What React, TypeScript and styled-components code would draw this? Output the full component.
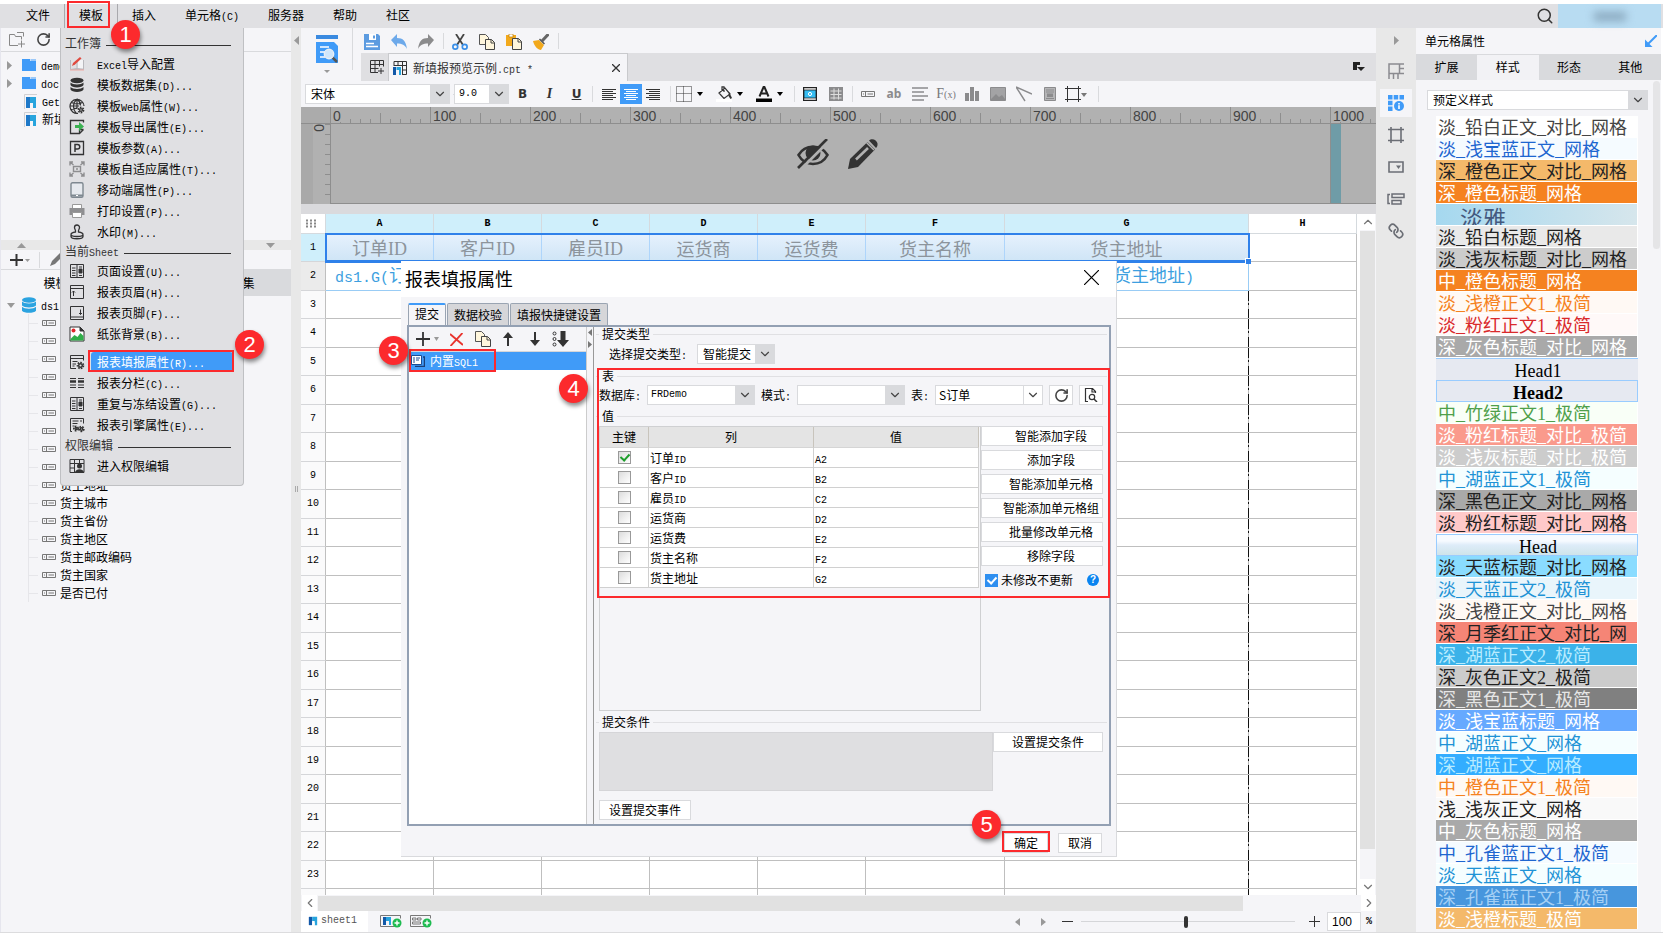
import React from "react";
import styled, { createGlobalStyle, css } from "styled-components";
import { ChevronDown, ChevronLeft, ChevronRight, ChevronUp, Link, RotateCw, Search } from "lucide-react";

const CJK = `"Noto Sans CJK SC", "Liberation Sans", sans-serif`;
const MONO = `"Liberation Mono", "Noto Sans CJK SC", monospace`;
const SERIF = `"Liberation Serif", "Noto Sans CJK SC", serif`;
const BLUE = "#409bf8";
const RED = "#fc2a2d";

const Global = createGlobalStyle`
  * { box-sizing: border-box; }
  body { margin: 0; overflow: hidden; background: #fff; }
  body, button, input, select, textarea { font-family: ${CJK}; font-size: 12px; line-height: 16px; color: #000; }
  button { padding: 0; border: 0; background: none; }
  ul { list-style: none; margin: 0; padding: 0; }
  svg { display: block; flex: none; }
`;

/* ---------- mixed CJK / half-width text ---------- */
const Latin = styled.span<{ $px: number }>`
  font-family: ${(p) => (p.$px === 18 ? SERIF : MONO)};
  font-size: ${(p) => p.$px}px;
  line-height: 1;
  white-space: pre;
`;
const Txt = ({ s, px = 10 }: { s: string; px?: number }) => (
  <span>
    {s.split(/([\x20-\x7e]+)/).map((part, i) =>
      i % 2 ? <Latin key={i} $px={px}>{part}</Latin> : part
    )}
  </span>
);

/* ---------- shared parts ---------- */
const Badge = styled.span<{ $x: number; $y: number }>`
  position: absolute;
  left: ${(p) => p.$x}px;
  top: ${(p) => p.$y}px;
  width: 29px;
  height: 29px;
  border-radius: 50%;
  background: ${RED};
  box-shadow: 1px 3px 4px rgba(0, 0, 0, 0.45);
  color: #fff;
  font: 22px/29px "Liberation Sans", sans-serif;
  text-align: center;
  z-index: 5;
`;
const RedBox = styled.span<{ $x: number; $y: number; $w: number; $h: number }>`
  position: absolute;
  left: ${(p) => p.$x}px;
  top: ${(p) => p.$y}px;
  width: ${(p) => p.$w}px;
  height: ${(p) => p.$h}px;
  border: 2px solid ${RED};
  pointer-events: none;
  z-index: 4;
`;
const Sep = styled.i<{ $l?: number; $r?: number; $h?: number }>`
  flex: none;
  width: 1px;
  height: ${(p) => p.$h ?? 16}px;
  margin: 0 ${(p) => p.$r ?? 0}px 0 ${(p) => p.$l ?? 0}px;
  background: #d9dadd;
`;
const Push = styled.span`
  flex: 1;
`;
const Icon = ({ w = 16, h = 16, vb, children }: { w?: number; h?: number; vb?: string; children: React.ReactNode }) => (
  <svg width={w} height={h} viewBox={vb ?? `0 0 ${w} ${h}`} fill="none" stroke="#333334" strokeWidth="1">
    {children}
  </svg>
);
const Tri = ({ dir, color = "#999", w = 8, h = 5 }: { dir: "u" | "d" | "l" | "r"; color?: string; w?: number; h?: number }) => {
  const pts = {
    d: `0,0 ${w},0 ${w / 2},${h}`,
    u: `0,${h} ${w},${h} ${w / 2},0`,
    l: `${w},0 ${w},${h} 0,${h / 2}`,
    r: `0,0 0,${h} ${w},${h / 2}`,
  }[dir];
  return (
    <svg width={w} height={h}>
      <polygon points={pts} fill={color} />
    </svg>
  );
};

const SelectWrap = styled.span<{ $w?: number }>`
  position: relative;
  display: flex;
  flex: none;
  width: ${(p) => (p.$w ? p.$w + "px" : "auto")};
  height: 20px;
`;
const NativeSelect = styled.select<{ $mono?: boolean; $px?: number; $pad?: number }>`
  appearance: none;
  width: 100%;
  height: 20px;
  margin: 0;
  padding: 0 20px 0 ${(p) => p.$pad ?? 5}px;
  border: 1px solid #d9dadd;
  border-radius: 0;
  background: #fff;
  font-family: ${(p) => (p.$mono ? MONO : CJK)};
  font-size: ${(p) => p.$px ?? 12}px;
  line-height: 18px;
`;
const Arrow = styled.span<{ $plain?: boolean }>`
  position: absolute;
  right: 0;
  top: 0;
  width: 20px;
  height: 20px;
  display: flex;
  align-items: center;
  justify-content: center;
  background: ${(p) => (p.$plain ? "#fff" : "#d9dadd")};
  border: 1px solid #d9dadd;
  color: #444;
  pointer-events: none;
`;
const Combo = ({ label, value, w, mono, px, pad, plain, id }: { label: string; value: string; w?: number; mono?: boolean; px?: number; pad?: number; plain?: boolean; id?: string }) => (
  <SelectWrap $w={w}>
    <NativeSelect id={id} aria-label={label} $mono={mono} $px={px} $pad={pad}>
      <option>{value}</option>
    </NativeSelect>
    <Arrow $plain={plain}>
      <ChevronDown size={14} strokeWidth={2} />
    </Arrow>
  </SelectWrap>
);

/* ---------- icons ---------- */
const Logo = ({ s = 12 }: { s?: number }) => (
  <svg width={s} height={s} viewBox="0 0 12 12">
    <path d="M1 1h4v10H1z" fill="#1258a8" />
    <path d="M5 1h6v10H8V6H5z" fill="#27a4dd" />
    <path d="M5 6l3 2v3H5z" fill="#fff" />
  </svg>
);
const Gear = ({ x, y, r = 2.4 }: { x: number; y: number; r?: number }) => (
  <g>
    <circle cx={x} cy={y} r={r + 0.6} stroke="#333" strokeWidth="1.6" strokeDasharray="1.6 1.1" />
    <circle cx={x} cy={y} r={r - 0.6} stroke="#333" strokeWidth="1.4" fill="#e0e0e3" />
  </g>
);
const PageCols = () => (
  <Icon>
    <path d="M1.5 1.500h13v13h-13zM8 1.500v13M3 5h3.500M3 7.500h3.500M3 10h3.500M3 12.500h3.500M10 4h3M10 12.500h3" />
    <path d="M10 6h3v4h-3z" fill="#333" />
  </Icon>
);
const menuIcons: Record<string, React.ReactNode> = {
  excel: (
    <Icon>
      <path d="M1.500 4v9.500h13V4M1.500 13.500l6.500-1 6.500 1M8 5v7" stroke="#b9b9bd" />
      <path d="M9 4h5v8H9z" fill="#f4f4f6" stroke="none" />
      <path d="M1 14h14" stroke="#f0a9a4" />
      <path d="M3 10l1-3 7-6 1.500 1.500-6.500 6z" fill="#e04a3f" stroke="none" />
    </Icon>
  ),
  db: (
    <Icon>
      <g fill="#333" stroke="none">
        <ellipse cx="8" cy="3.500" rx="6.500" ry="2.700" />
        <path d="M1.500 5.500c2 2.600 11 2.600 13 0v2.500c-1 3.200-12 3.200-13 0z" />
        <path d="M1.500 10c2 2.600 11 2.600 13 0v2.500c-1 3.200-12 3.200-13 0z" />
      </g>
    </Icon>
  ),
  web: (
    <Icon>
      <path d="M9 15.300A7 7 0 1 1 15 8M1 8h9M8 1v9M2.500 4.500c3 1.500 8 1.500 11 0M2.500 11.500c2-1 4-1.200 6-1M8 1C3.500 5 3.500 11 7 15M8 1c3 2.500 3.500 5 3.500 6.500" strokeWidth="1.200" />
      <Gear x={12} y={12} r={2} />
    </Icon>
  ),
  export: (
    <Icon>
      <path d="M14.500 3.500V1.500h-13v13h9l4-4M10.500 14.500v-4h4" strokeWidth="1.300" />
      <path d="M6 6h4V3l5 4.500-5 4.500V9H6z" fill="#3bb152" stroke="none" />
    </Icon>
  ),
  param: (
    <Icon>
      <path d="M1.500 1.500h13v13h-13z" strokeWidth="1.300" />
      <path d="M6 12V4.500h2.500a2 2 0 0 1 0 4.500H6" strokeWidth="1.500" />
    </Icon>
  ),
  fit: (
    <Icon>
      <g stroke="#8e8e90" strokeWidth="1.400">
        <path d="M4.500 5.500h7v5h-7zM1 1l3.500 3M15 1l-3.500 3M1 15l3.500-3M15 15l-3.500-3M1 4.500V1h3M12 1h3v3.500M1 11.500V15h3M12 15h3v-3.500M7 8h2" />
      </g>
    </Icon>
  ),
  mobile: (
    <Icon>
      <rect x="2" y="0.700" width="12" height="14.600" rx="1.500" fill="#e6e9ee" stroke="#7e8890" strokeWidth="1.400" />
      <path d="M2 12.500h12v2H2z" fill="#7e8890" stroke="none" />
      <path d="M7 13.500h2" stroke="#fff" />
    </Icon>
  ),
  print: (
    <Icon>
      <path d="M3.500 1.500h9v4h-9z" fill="#fff" stroke="#999" />
      <path d="M0.500 5h15v7h-15z" fill="#8f8f91" stroke="none" />
      <path d="M3.500 9.500h9v5h-9z" fill="#fff" stroke="#999" />
    </Icon>
  ),
  stamp: (
    <Icon>
      <path d="M6.500 8C7 6 5.500 5.500 5.500 3.500a2.500 2.500 0 0 1 5 0C10.500 5.500 9 6 9.500 8c3 .5 4.500 1.500 4.500 2.500s-2 2-6 2-6-1-6-2S3.500 8.500 6.500 8zM2 11v1.500c0 3 12 3 12 0V11" strokeWidth="1.300" />
    </Icon>
  ),
  page: <PageCols />,
  header: (
    <Icon>
      <path d="M1.500 1.500h13v13h-13zM1.500 4.500h13M4.500 7v5M3 8.500L4.500 7 6 8.500" />
    </Icon>
  ),
  footer: (
    <Icon>
      <path d="M1.500 1.500h13v13h-13zM1.500 12h13M11.500 4.500v5M10 8l1.500 1.500L13 8" />
    </Icon>
  ),
  image: (
    <Icon>
      <path d="M1 1h10l4 4v10H1z" fill="#fff" stroke="#333" />
      <path d="M11 1v4h4z" fill="#333" />
      <circle cx="4.500" cy="4.500" r="2" fill="#e0262a" stroke="none" />
      <path d="M1.500 13l4-4 3 2 3-4 3 3v4.500h-13z" fill="#2fae49" stroke="none" />
    </Icon>
  ),
  fill: (
    <Icon>
      <path d="M7 14.500H1.500v-13h13v5M1.500 4.500h13M3.500 7.500h5M3.500 10h3.500M3.500 12h2" />
      <Gear x={11.500} y={11.500} />
    </Icon>
  ),
  cols: (
    <Icon>
      <path d="M1 3.500h6M9 3.500h6M1 10h6M9 10h6M1 12.500h6M9 12.500h6" />
      <path d="M1 6.500h6M9 6.500h6" strokeWidth="2.500" />
    </Icon>
  ),
  engine: (
    <Icon>
      <path d="M3 14.500H1.500v-13h13v5M3.500 4h6M11 4h2M3.500 6.500h5M3.500 9h2" />
      <Gear x={7} y={11.500} r={1.600} />
      <Gear x={12.500} y={12} r={1.800} />
    </Icon>
  ),
  perm: (
    <Icon>
      <path d="M1 1.500h14v13H1zM1 5.500h14M1 10h4M5.500 1v14M10.500 1v5" />
      <circle cx="10.500" cy="8" r="2.500" fill="#333" stroke="none" />
      <path d="M6 15c0-5 9-5 9 0z" fill="#333" stroke="none" />
    </Icon>
  ),
};

/* ---------- shell ---------- */
const App_ = styled.div`
  display: flex;
  flex-direction: column;
  height: 100vh;
  padding-top: 4px;
  border-bottom: 1px solid #dcdcde;
  background: #fff;
`;
const MenuBar = styled.nav`
  display: flex;
  flex: none;
  height: 24px;
  padding-left: 11px;
  background: #e0e0e3;
  position: relative;
  z-index: 10;
`;
const MenuEntry = styled.div<{ $open?: boolean }>`
  position: relative;
  display: flex;
  ${(p) => p.$open && css`box-shadow: inset 1px 0 #a9a9ad, 1px 0 #a9a9ad;`}
`;
const MenuButton = styled.button`
  padding: 0 14px 2px 15px;
  white-space: nowrap;
`;
const SearchButton = styled.button`
  width: 24px;
  display: grid;
  place-items: center;
`;
const UserArea = styled.div`
  width: 103px;
  margin: 0 2px 0 1px;
  background: #b8dcf2;
  display: grid;
  place-items: center;
`;
const UserBlur = styled.span`
  width: 32px;
  height: 9px;
  background: #8aa9bf;
  filter: blur(4px);
`;
const Popup = styled.div`
  position: absolute;
  left: -4px;
  top: 24px;
  width: 184px;
  padding: 5px 0 9px;
  background: #e0e0e3;
  border: 1px solid #bfc0c3;
  border-top: 0;
  border-radius: 0 0 4px 4px;
`;
const PopupHead = styled.div<{ $h?: number }>`
  display: flex;
  align-items: center;
  gap: 5px;
  height: ${(p) => p.$h ?? 20}px;
  margin: 0 12px 0 4px;
  color: #333;
  &::after {
    content: "";
    flex: 1;
    height: 1px;
    margin-top: 4px;
    background: #333;
  }
`;
const PopupItem = styled.button<{ $active?: boolean }>`
  display: flex;
  align-items: center;
  width: 172px;
  height: 21px;
  padding-left: 8px;
  text-align: left;
  color: ${(p) => (p.$active ? "#fff" : "#000")};
  & > span {
    flex: 1;
    margin-left: 6px;
    padding-left: 6px;
    line-height: 20px;
    border-radius: 3px;
    background: ${(p) => (p.$active ? BLUE : "transparent")};
  }
`;
const PopupRule = styled.div`
  height: 7px;
  margin: 0 14px 0 30px;
  border-bottom: 1px dashed #999;
`;

const Main = styled.div`
  flex: 1;
  min-height: 0;
  display: grid;
  grid-template-columns: 291px 10px minmax(0, 1fr) 40px 245px 2px;
`;

/* ---------- left ---------- */
const Left = styled.aside`
  display: flex;
  flex-direction: column;
  min-height: 0;
  border-left: 1px solid #e6e6ee;
  background: #f5f5f8;
`;
const LeftBar = styled.div<{ $h: number; $gap: number }>`
  display: flex;
  flex: none;
  align-items: center;
  gap: ${(p) => p.$gap}px;
  height: ${(p) => p.$h}px;
  padding-left: 8px;
  border-bottom: 1px solid #d9dadd;
`;
const Tree = styled.ul<{ $h?: number }>`
  flex: none;
  height: ${(p) => (p.$h ? p.$h + "px" : "auto")};
  padding-top: ${(p) => (p.$h ? 4 : 0)}px;
`;
const TreeRow = styled.li`
  display: flex;
  align-items: center;
  height: 18px;
  padding-left: 6px;
  white-space: nowrap;
`;
const Twist = styled.span`
  width: 15px;
`;
const NodeText = styled.span`
  margin-left: 5px;
`;
const Splitter = styled.div`
  display: flex;
  flex: none;
  align-items: center;
  justify-content: space-between;
  height: 10px;
  padding: 0 16px;
  background: #e8e8e8;
`;
const DsTabs = styled.div`
  display: grid;
  grid-template-columns: 1fr 1fr;
  flex: none;
  height: 26px;
`;
const DsTab = styled.button<{ $active?: boolean }>`
  background: ${(p) => (p.$active ? "#f5f5f8" : "#d9dadd")};
`;
const Field = styled.li`
  display: flex;
  align-items: center;
  gap: 4px;
  height: 18px;
  margin-left: 27px;
  border-left: 1px solid #e6e6ea;
  &::before {
    content: "";
    width: 9px;
    height: 1px;
    background: #e6e6ea;
  }
`;
const VSplit = styled.div`
  display: flex;
  flex-direction: column;
  align-items: center;
  justify-content: space-between;
  padding: 8px 0 440px;
  background: #e8e8e8;
`;
const Grip = styled.i`
  width: 3px;
  height: 6px;
  border: solid #aaa;
  border-width: 0 1px;
`;

/* ---------- centre ---------- */
const Center = styled.main`
  position: relative;
  display: flex;
  flex-direction: column;
  min-width: 0;
  min-height: 0;
  background: #f5f5f8;
`;
const TopTools = styled.div`
  display: flex;
  flex: none;
  height: 53px;
`;
const PreviewButton = styled.button`
  display: flex;
  flex-direction: column;
  align-items: center;
  gap: 7px;
  width: 51px;
  padding-top: 7px;
`;
const TopRight = styled.div`
  flex: 1;
  min-width: 0;
  display: flex;
  flex-direction: column;
  padding-left: 8px;
`;
const QuickBar = styled.div`
  display: flex;
  align-items: center;
  height: 25px;
`;
const Quick = styled.button`
  width: 27px;
  height: 24px;
  padding: 2px 0 0 3px;
`;
const FileTabs = styled.div`
  display: flex;
  align-items: center;
  height: 28px;
  padding-right: 11px;
  background: #dfdfe2;
`;
const NewTab = styled.button`
  width: 27px;
  padding-left: 9px;
`;
const FileTab = styled.div`
  display: flex;
  align-items: center;
  gap: 6px;
  width: 240px;
  height: 28px;
  padding: 0 7px 0 4px;
  border: solid #c9cacd;
  border-width: 1px 1px 0;
  background: #f5f5f8;
  color: #333;
`;
const FormatBar = styled.div`
  display: flex;
  flex: none;
  align-items: center;
  height: 26px;
  padding-left: 4px;
`;
const Tool = styled.button<{ $w: number; $active?: boolean; $menu?: boolean }>`
  display: flex;
  flex: none;
  align-items: center;
  justify-content: ${(p) => (p.$menu ? "flex-start" : "center")};
  gap: 5px;
  width: ${(p) => p.$w}px;
  height: 20px;
  padding-left: ${(p) => (p.$menu ? 2 : 0)}px;
  background: ${(p) => (p.$active ? BLUE : "transparent")};
`;
const Glyph = styled.span<{ $kind: "b" | "i" | "u" | "ab" | "fx" }>`
  font: 700 12px/16px "DejaVu Sans", sans-serif;
  color: #333;
  ${(p) => p.$kind === "i" && css`font: italic 700 14px/16px "Liberation Serif", serif;`}
  ${(p) => p.$kind === "u" && css`text-decoration: underline;`}
  ${(p) => p.$kind === "ab" && css`font: 700 12px/16px "Noto Sans", sans-serif; color: #8b8b8d;`}
  ${(p) => p.$kind === "fx" && css`font: 14px/16px "Liberation Serif", serif; color: #77777a;`}
`;
const FxArg = styled.span`
  font-size: 10px;
`;

const Canvas = styled.section`
  display: grid;
  grid-template-columns: 29px minmax(0, 1fr);
  grid-template-rows: 17px 80px;
  flex: none;
  overflow: hidden;
  background: #b1b1b1;
`;
const Corner = styled.div`
  border-bottom: 1px solid #8e8e8e;
  background: #ababab;
`;
const HRuler = styled.div`
  display: flex;
  overflow: hidden;
  border-bottom: 1px solid #8e8e8e;
  background: repeating-linear-gradient(90deg, #8e8e8e 0 1px, transparent 1px 10px) 0 100% / 100% 4px no-repeat,
    linear-gradient(90deg, transparent 50px, #8e8e8e 50px 51px, transparent 51px) 0 100% / 100px 10px repeat-x;
`;
const HMark = styled.span`
  flex: none;
  width: 100px;
  height: 16px;
  border-left: 1px solid #8e8e8e;
  & > span {
    display: inline-block;
    height: 15px;
    padding: 0 2px 0 2px;
    background: #b1b1b1;
    font: 14px/18px "Liberation Sans", sans-serif;
    color: #444;
  }
`;
const VRuler = styled.div`
  padding: 0 8px 0 12px;
  background: repeating-linear-gradient(#8e8e8e 0 1px, transparent 1px 10px) 100% 0 / 5px 100% no-repeat,
    linear-gradient(90deg, #a9a9a9 12px, #b1b1b1 12px);
  & > span {
    display: block;
    width: 12px;
    height: 9px;
    font: 14px/12px "Liberation Sans", sans-serif;
    color: #444;
    writing-mode: vertical-rl;
  }
`;
const CanvasBody = styled.div`
  display: flex;
  overflow: hidden;
  border: solid #8e8e8e;
  border-width: 0 0 1px 1px;
`;
const CanvasPage = styled.div`
  display: flex;
  flex: none;
  justify-content: center;
  gap: 19px;
  width: 1000px;
  padding: 15px 0 0 14px;
  border-right: 1px solid #8e8e8e;
`;
const TealStrip = styled.i`
  width: 10px;
  background: #6f9ca7;
`;
const GrayGap = styled.div`
  flex: none;
  height: 10px;
  background: #dadadd;
`;

const SheetArea = styled.div`
  position: relative;
  flex: 1;
  min-height: 0;
  display: grid;
  grid-template-columns: minmax(0, 1fr) 16px;
  overflow: hidden;
  background: #fff;
`;
const SheetClip = styled.div`
  overflow: hidden;
  min-height: 0;
  position: relative;
`;
const Grid = styled.table`
  table-layout: fixed;
  width: 1056px;
  border-collapse: separate;
  border-spacing: 0;
  background: #fff;
`;
const ColHead = styled.th<{ $on?: boolean }>`
  height: 20px;
  padding: 0;
  border: solid #d5dade;
  border-width: 0 1px 1px 0;
  background: ${(p) => (p.$on ? "#cfeffb" : "#fff")};
  font: 700 10px/18px ${MONO};
`;
const RowHead = styled.th<{ $bg: string }>`
  padding: 0;
  border: solid #bfbfbf;
  border-width: 0 1px 1px 0;
  border-bottom-color: #d5d6d9;
  background: ${(p) => p.$bg};
  font: 400 10px/16px ${MONO};
`;
const Row = styled.tr<{ $h: number }>`
  height: ${(p) => p.$h}px;
`;
const Cell = styled.td<{ $kind?: "title" | "data"; $left?: boolean; $break?: boolean }>`
  padding: 0;
  border: solid #bfbfbf;
  border-width: 0 1px 1px 0;
  text-align: center;
  white-space: nowrap;
  font-size: 18px;
  line-height: 20px;
  ${(p) => p.$kind === "title" && css`color: #8c949c; background: linear-gradient(#e6f1fd, #cfe5f6); border-color: #aed5fb;`}
  ${(p) => p.$kind === "data" && css`color: #3d9fe0; border-color: #99ccf5; padding-bottom: 3px; overflow: hidden;`}
  ${(p) => p.$left && css`text-align: left; padding-left: 9px;`}
  ${(p) =>
    p.$break &&
    css`
      border-right: 0;
      background: repeating-linear-gradient(#111 0 10px, #bbb 10px 12px, #111 12px 14px, #bbb 14px 18px) 100% 0 / 1px 100% no-repeat;
    `}
`;
const Selection = styled.div`
  position: absolute;
  left: 24px;
  top: 19px;
  width: 925px;
  height: 30px;
  border: 2px solid #2f81ea;
  border-bottom-width: 3px;
  &::after {
    content: "";
    position: absolute;
    right: -3px;
    bottom: -4px;
    width: 5px;
    height: 5px;
    background: #2f81ea;
    border: solid #fff;
    border-width: 1px 0 0 1px;
    box-sizing: content-box;
  }
`;
const VScroll = styled.div`
  display: flex;
  flex-direction: column;
  background: #f5f5f8;
`;
const ScrollButton = styled.button`
  flex: none;
  width: 15px;
  height: 16px;
  display: grid;
  place-items: center;
  background: #fff;
  color: #777;
`;
const VThumb = styled.div`
  flex: 1;
  margin: 1px 1px 30px 0;
  background: #e1e1e1;
`;
const HScroll = styled.div`
  display: flex;
  flex: none;
  height: 16px;
  padding-left: 1px;
`;
const HThumb = styled.div`
  flex: 1;
  margin: 1px 118px 0 1px;
  background: #e1e1e1;
`;
const Status = styled.div`
  display: flex;
  flex: none;
  align-items: center;
  height: 21px;
`;
const SheetTab = styled.button`
  display: flex;
  align-items: center;
  gap: 3px;
  width: 67px;
  height: 21px;
  margin-right: 12px;
  padding: 0 0 2px 7px;
  background: #fff;
  color: #555;
`;
const StatusIcon = styled.button`
  margin-right: 7px;
`;
const Range = styled.input`
  appearance: none;
  width: 214px;
  height: 12px;
  margin: 0 14px 0 8px;
  background: linear-gradient(#d5d6d9, #d5d6d9) 0 50% / 100% 1px no-repeat;
  &::-webkit-slider-thumb {
    appearance: none;
    width: 4px;
    height: 12px;
    border-radius: 2px;
    background: #333;
  }
`;
const ZoomInput = styled.input`
  width: 34px;
  height: 19px;
  margin: 0 5px 0 7px;
  padding: 0 4px;
  border: 1px solid #d9dadd;
  background: #fff;
  font: 12px/16px "Liberation Sans", sans-serif;
`;
const Percent = styled.span`
  width: 10px;
  font: 700 10px/16px ${MONO};
`;

/* ---------- dialog ---------- */
const Dialog = styled.div`
  position: absolute;
  left: 100px;
  top: 233px;
  width: 716px;
  background: #f5f5f8;
  border: solid #d9dadd;
  border-width: 0 1px 1px 0;
  z-index: 3;
`;
const DialogTitle = styled.header`
  display: flex;
  align-items: center;
  justify-content: space-between;
  height: 36px;
  padding: 0 17px 3px 4px;
  background: #fff;
  font-size: 18px;
  line-height: 24px;
`;
const DialogTabs = styled.div`
  display: flex;
  gap: 1px;
  height: 28px;
  padding: 6px 0 0 7px;
`;
const DialogTab = styled.button<{ $active?: boolean }>`
  padding: 0 6px;
  border: 1px solid #9aa4b2;
  border-bottom: 0;
  border-radius: 2px 2px 0 0;
  line-height: 20px;
  background: ${(p) => (p.$active ? "#f5f5f8" : "#d6d6d9")};
  ${(p) => p.$active && css`border-top: 2px solid ${BLUE}; padding-bottom: 2px; line-height: 18px;`}
`;
const Pane = styled.div`
  position: relative;
  display: grid;
  grid-template-columns: 185px minmax(0, 1fr);
  margin: 0 5px 0 6px;
  height: 501px;
  border: 2px solid #93a0b3;
`;
const SubmitSide = styled.div`
  display: flex;
  border-right: 1px solid #999;
`;
const SubmitMain = styled.div`
  display: flex;
  flex-direction: column;
  width: 179px;
  border-right: 1px solid #ccc;
`;
const SubmitTools = styled.div`
  display: flex;
  align-items: center;
  height: 25px;
  padding-left: 7px;
  border-bottom: 1px solid #d5d6d9;
`;
const SubmitTool = styled.button<{ $w: number }>`
  display: flex;
  align-items: center;
  gap: 4px;
  width: ${(p) => p.$w}px;
`;
const SubmitList = styled.ul`
  flex: 1;
  background: #fff;
`;
const SubmitItem = styled.li`
  display: flex;
  align-items: center;
  gap: 5px;
  height: 18px;
  padding-left: 2px;
  background: ${BLUE};
  color: #fff;
`;
const Nubs = styled.div`
  display: flex;
  flex-direction: column;
  gap: 5px;
  padding: 2px 1px;
`;
const Form = styled.div`
  padding: 0 2px 0 2px;
`;
const Legend = styled.div<{ $mt?: number; $mb?: number }>`
  display: flex;
  align-items: center;
  gap: 3px;
  height: 14px;
  margin: ${(p) => p.$mt ?? 0}px 0 ${(p) => p.$mb ?? 3}px;
  &::before,
  &::after {
    content: "";
    width: 3px;
    height: 1px;
    background: #e0e0e3;
  }
  &::after {
    flex: 1;
  }
`;
const Line = styled.div<{ $indent?: number; $gap?: number }>`
  display: flex;
  align-items: center;
  gap: ${(p) => p.$gap ?? 6}px;
  height: 20px;
  padding-left: ${(p) => p.$indent ?? 3}px;
`;
const Button = styled.button<{ $w: number; $pad?: number }>`
  display: flex;
  flex: none;
  align-items: center;
  justify-content: center;
  width: ${(p) => p.$w}px;
  height: 20px;
  padding-left: ${(p) => p.$pad ?? 0}px;
  border: 1px solid #d9dadd;
  background: #fff;
  line-height: 16px;
`;
const Values = styled.div`
  display: flex;
  height: 285px;
  margin-left: 3px;
`;
const TableBox = styled.div`
  width: 382px;
  border: 1px solid #cfd0d2;
`;
const FieldTable = styled.table`
  table-layout: fixed;
  width: 379px;
  border-collapse: separate;
  border-spacing: 0;
  & th {
    height: 21px;
    padding: 0;
    border-bottom: 1px solid #d5d5d5;
    border-right: 1px solid #c8c4bc;
    background: #e4e4e4;
    font-weight: 400;
  }
  & td {
    height: 20px;
    padding: 0 0 0 1px;
    border: solid #d0d0d0;
    border-width: 0 1px 1px 0;
    background: #fff;
    line-height: 16px;
  }
`;
const KeyBox = styled.input`
  appearance: none;
  display: block;
  width: 13px;
  height: 13px;
  margin: 0 auto;
  border: 1px solid #999;
  background: linear-gradient(135deg, #dcdcdc, #fff);
  &:checked::after {
    content: "";
    display: block;
    width: 4px;
    height: 7px;
    margin: 0 0 0 3px;
    border: solid #1e9e2c;
    border-width: 0 2px 2px 0;
    transform: rotate(42deg);
  }
`;
const Actions = styled.div`
  display: flex;
  flex-direction: column;
  gap: 4px;
`;
const CheckLine = styled.label`
  display: flex;
  align-items: center;
  gap: 3px;
  height: 20px;
  padding: 0 4px;
`;
const BlueBox = styled(KeyBox)`
  margin: 0;
  border-color: #2f8ff0;
  background: #2f8ff0;
  &:checked::after {
    border-color: #fff;
  }
`;
const Help = styled.button`
  width: 12px;
  height: 12px;
  margin-left: 11px;
  border-radius: 50%;
  background: #0a84f0;
  color: #fff;
  font: 700 10px/12px "Liberation Sans", sans-serif;
`;
const Condition = styled.div`
  display: flex;
  margin: 0 0 9px 3px;
`;
const ConditionText = styled.textarea`
  display: block;
  width: 394px;
  height: 59px;
  border: 1px solid #d5d5d8;
  background: #dfdfe1;
  resize: none;
`;
const DialogFoot = styled.footer`
  position: relative;
  display: flex;
  justify-content: flex-end;
  gap: 10px;
  padding: 7px 14px 3px;
`;

/* ---------- right ---------- */
const Rail = styled.div`
  display: flex;
  flex-direction: column;
  align-items: center;
  gap: 4px;
  background: #e8e8e8;
`;
const RailTop = styled.span`
  display: grid;
  place-items: center;
  height: 25px;
`;
const RailButton = styled.button<{ $active?: boolean }>`
  display: grid;
  place-items: center;
  width: 32px;
  height: 28px;
  background: ${(p) => (p.$active ? "#f5f5f8" : "transparent")};
`;
const Right = styled.aside`
  display: flex;
  flex-direction: column;
  min-height: 0;
  overflow: hidden;
  background: #f5f5f8;
`;
const RightTitle = styled.div`
  display: flex;
  flex: none;
  align-items: center;
  justify-content: space-between;
  height: 27px;
  padding: 0 4px 0 9px;
  border-bottom: 1px solid #d9dadd;
`;
const RightTabs = styled.div`
  display: grid;
  grid-template-columns: repeat(4, 1fr);
  flex: none;
  height: 25px;
`;
const RightTab = styled.button<{ $active?: boolean }>`
  padding-bottom: 2px;
  background: ${(p) => (p.$active ? "#f2f2f5" : "#d9dadd")};
`;
const RightBody = styled.div`
  position: relative;
  flex: 1;
  min-height: 0;
  padding: 10px 13px 0 11px;
  overflow: hidden;
`;
const RightThumb = styled.i`
  position: absolute;
  right: 1px;
  top: 1px;
  width: 7px;
  height: 168px;
  border-radius: 4px;
  background: #e5e5e7;
`;
const StyleList = styled.ul`
  margin: 6px 10px 0 9px;
  padding-right: 1px;
  background: #fff;
`;
const StyleRow = styled.li<{ $bg: string; $fg: string; $kind?: string }>`
  height: 21px;
  margin-bottom: 1px;
  padding-left: 2px;
  background: ${(p) => p.$bg};
  color: ${(p) => p.$fg};
  font-size: 18px;
  line-height: 21px;
  white-space: nowrap;
  ${(p) => p.$kind === "big" && css`font-size: 23px; line-height: 26px; padding-left: 24px; overflow: hidden;`}
  ${(p) => p.$kind?.startsWith("head") && css`text-align: center; line-height: 20px; border: 1px solid #99ccff; height: 22px; margin: 0 -1px 0 0;`}
  ${(p) => p.$kind === "head1" && css`border-width: 1px 0 0;`}
  ${(p) => p.$kind === "head2" && css`font-weight: 700;`}
`;

/* ---------- data ---------- */
type Item = { icon: string; text: string; active?: boolean };
const workbook: Item[] = [
  { icon: "excel", text: "Excel导入配置" },
  { icon: "db", text: "模板数据集(D)..." },
  { icon: "web", text: "模板Web属性(W)..." },
  { icon: "export", text: "模板导出属性(E)..." },
  { icon: "param", text: "模板参数(A)..." },
  { icon: "fit", text: "模板自适应属性(T)..." },
  { icon: "mobile", text: "移动端属性(P)..." },
  { icon: "print", text: "打印设置(P)..." },
  { icon: "stamp", text: "水印(M)..." },
];
const sheetA: Item[] = [
  { icon: "page", text: "页面设置(U)..." },
  { icon: "header", text: "报表页眉(H)..." },
  { icon: "footer", text: "报表页脚(F)..." },
  { icon: "image", text: "纸张背景(B)..." },
];
const sheetB: Item[] = [
  { icon: "fill", text: "报表填报属性(R)...", active: true },
  { icon: "cols", text: "报表分栏(C)..." },
  { icon: "page", text: "重复与冻结设置(G)..." },
  { icon: "engine", text: "报表引擎属性(E)..." },
];
const fields = ["订单ID", "客户ID", "雇员ID", "订购日期", "到货日期", "发货日期", "运货商", "运货费", "货主名称", "货主地址", "货主城市", "货主省份", "货主地区", "货主邮政编码", "货主国家", "是否已付"];
const columns: [string, number][] = [["A", 108], ["B", 108], ["C", 108], ["D", 108], ["E", 108], ["F", 139], ["G", 244], ["H", 108]];
const titles = ["订单ID", "客户ID", "雇员ID", "运货商", "运货费", "货主名称", "货主地址"];

const OR = "#f58220", K = "#222", SKY = "#1f93d6";
const styleRows: [string, string, string, string?][] = [
  ["淡_铅白正文_对比_网格", "#fff", "#444"],
  ["淡_浅宝蓝正文_网格", "#f5fbff", "#1e66d0"],
  ["深_橙色正文_对比_网格", "#f4b96a", K],
  ["深_橙色标题_网格", OR, "#fff"],
  ["淡雅", "linear-gradient(90deg,#a5d8ef,#d6e6ec)", "#44597f", "big"],
  ["淡_铅白标题_网格", "#e9e9e9", K],
  ["淡_浅灰标题_对比_网格", "#ccc", K],
  ["中_橙色标题_网格", OR, "#fff"],
  ["淡_浅橙正文1_极简", "#fff9f4", OR],
  ["淡_粉红正文1_极简", "#fff9f8", "#d9292b"],
  ["深_灰色标题_对比_网格", "#a9a9a9", "#fff"],
  ["Head1", "#e6e9f1", "#000", "head1"],
  ["Head2", "#e6e9f1", "#000", "head2"],
  ["中_竹绿正文1_极简", "#f9fff7", "#4fa04a"],
  ["淡_粉红标题_对比_极简", "#fa9a8c", "#fff"],
  ["淡_浅灰标题_对比_极简", "#ccc", "#fff"],
  ["中_湖蓝正文1_极简", "#f5feff", SKY],
  ["深_黑色正文_对比_网格", "#a9a9a9", K],
  ["淡_粉红标题_对比_网格", "#ffc9c9", K],
  ["Head", "linear-gradient(#f6faff 30%,#deecf9 50%,#cfe4ea)", "#000", "head"],
  ["淡_天蓝标题_对比_网格", "#8adcff", K],
  ["淡_天蓝正文2_极简", "#e9f5fb", SKY],
  ["淡_浅橙正文_对比_网格", "#fff9f4", "#444"],
  ["深_月季红正文_对比_网", "#f58576", K],
  ["深_湖蓝正文2_极简", "#3bb2e9", "#b9ecff"],
  ["深_灰色正文2_极简", "#ccc", K],
  ["深_黑色正文1_极简", "#808080", "#e6e6e6"],
  ["淡_浅宝蓝标题_网格", "#66a9ff", "#fff"],
  ["中_湖蓝正文_网格", "#f5feff", SKY],
  ["深_湖蓝正文_网格", "#33adff", "#b9ecff"],
  ["中_橙色正文1_极简", "#fff9f4", OR],
  ["浅_浅灰正文_网格", "#f9f9f9", K],
  ["中_灰色标题_网格", "#a9a9a9", "#fff"],
  ["中_孔雀蓝正文1_极简", "#f5fbff", "#1e66d0"],
  ["淡_天蓝正文_网格", "#f5feff", SKY],
  ["深_孔雀蓝正文1_极简", "#4796dd", "#a5d0f5"],
  ["淡_浅橙标题_极简", "#f4b96a", "#fff"],
];

/* ---------- sections ---------- */
const MenuItems = ({ items }: { items: Item[] }) => (
  <>
    {items.map((m) => (
      <PopupItem key={m.text} $active={m.active}>
        {menuIcons[m.icon]}
        <Txt s={m.text} />
      </PopupItem>
    ))}
  </>
);

const TopMenu = () => (
  <MenuBar>
    {["文件", "模板", "插入", "单元格(C)", "服务器", "帮助", "社区"].map((m) => (
      <MenuEntry key={m} $open={m === "模板"}>
        <MenuButton><Txt s={m} /></MenuButton>
        {m === "模板" && (
          <>
            <RedBox $x={3} $y={-3} $w={43} $h={27} />
            <Badge $x={47} $y={16}>1</Badge>
            <Popup>
              <PopupHead>工作簿</PopupHead>
              <MenuItems items={workbook} />
              <PopupHead $h={18}><Txt s="当前Sheet" /></PopupHead>
              <MenuItems items={sheetA} />
              <PopupRule />
              <MenuItems items={sheetB} />
              <PopupHead>权限编辑</PopupHead>
              <MenuItems items={[{ icon: "perm", text: "进入权限编辑" }]} />
              <RedBox $x={27} $y={322} $w={146} $h={22} />
              <Badge $x={174} $y={302}>2</Badge>
            </Popup>
          </>
        )}
      </MenuEntry>
    ))}
    <Push />
    <SearchButton aria-label="搜索"><Search size={18} strokeWidth={2} color="#333" /></SearchButton>
    <UserArea><UserBlur /></UserArea>
  </MenuBar>
);

const Folder = () => (
  <svg width="14" height="12"><path d="M0 0h8v2h6v10H0z" fill={BLUE} /><path d="M8.500 1h5.500" stroke={BLUE} /></svg>
);
const FieldIcon = () => (
  <Icon w={14} h={6}><path d="M.5.500h13v5H.5zM4.500.500v5M2 3h1M6.500 3h5.500" stroke="#777" /></Icon>
);
const FileIcon = () => (
  <Icon w={15} h={15}><path d="M2.500 15V.500H15" stroke="#d0d0d3" /><g transform="translate(4 2)"><path d="M0 1h4v11H0z" fill="#1e78c8" stroke="none" /><path d="M4 1h6v11H7V7H4z" fill="#27a4dd" stroke="none" /></g></Icon>
);

const LeftPanel = () => (
  <Left>
    <LeftBar $h={24} $gap={11}>
      <Icon><path d="M9 13.500H.5v-11h5l1 2h6v3M8 .500h6.500v4M12.500 8.500v7M9 12h7" stroke="#888" /></Icon>
      <RotateCw size={15} strokeWidth={2.500} color="#444" />
    </LeftBar>
    <Tree $h={188}>
      <TreeRow><Twist><Tri dir="r" w={5} h={9} /></Twist><Folder /><NodeText><Latin $px={10}>demo</Latin></NodeText></TreeRow>
      <TreeRow><Twist><Tri dir="r" w={5} h={9} /></Twist><Folder /><NodeText><Latin $px={10}>doc</Latin></NodeText></TreeRow>
      <TreeRow><Twist /><FileIcon /><NodeText><Latin $px={10}>Getting</Latin></NodeText></TreeRow>
      <TreeRow><Twist /><FileIcon /><NodeText>新填报预览</NodeText></TreeRow>
    </Tree>
    <Splitter><Tri dir="u" w={9} /><Tri dir="d" w={9} /></Splitter>
    <LeftBar $h={20} $gap={9}>
      <Icon w={21} h={14}><path d="M7.500 1v12M1 7h13" stroke="#333" strokeWidth="2" /><path d="M16 6h5l-2.500 3z" fill="#999" stroke="none" /></Icon>
      <Sep />
      <Icon w={14} h={14}><path d="M1 13l2-5 8-8 3 3-8 8z" fill="#777" stroke="none" /></Icon>
    </LeftBar>
    <DsTabs>
      <DsTab $active>模板数据集</DsTab>
      <DsTab>服务器数据集</DsTab>
    </DsTabs>
    <Tree>
      <TreeRow>
        <Twist><Tri dir="d" w={8} h={5} /></Twist>
        <svg width="14" height="16" fill="#2ba3e0">
          <ellipse cx="7" cy="3" rx="7" ry="2.800" />
          <path d="M0 4.500c2 2.500 12 2.500 14 0v4c-2 2.500-12 2.500-14 0zM0 9.800c2 2.500 12 2.500 14 0v4c-2 2.700-12 2.700-14 0z" />
        </svg>
        <NodeText><Latin $px={10}>ds1</Latin></NodeText>
      </TreeRow>
      {fields.map((f) => (
        <Field key={f}><FieldIcon /><Txt s={f} /></Field>
      ))}
    </Tree>
  </Left>
);

const AlignIcon = ({ a, c = "#333" }: { a: "l" | "c" | "r"; c?: string }) => {
  const xs = { l: [0, 14, 0, 11], c: [0, 14, 2, 12], r: [0, 14, 3, 14] }[a];
  return (
    <Icon w={14} h={13}>
      {[0, 1, 2, 3, 4, 5].map((i) => (
        <path key={i} d={`M${i % 2 ? xs[2] : xs[0]} ${i * 2 + 1}.500H${i % 2 ? xs[3] : xs[1]}`} stroke={c} />
      ))}
    </Icon>
  );
};
const Caret = ({ color = "#000" }: { color?: string }) => <Tri dir="d" color={color} w={6} h={4} />;
const CopyIcon = () => (
  <Icon>
    <path d="M.5.500h6l3 3v7h-9z" fill="#fff6dc" stroke="#555" />
    <path d="M6.500 5.500h6l3 3v7h-9z" fill="#fff6dc" stroke="#444" />
    <path d="M12 5.500v3.500h3.500" stroke="#444" />
  </Icon>
);
const GridIcon = ({ plus }: { plus?: boolean }) => (
  <Icon w={14} h={14}>
    {plus ? (
      <path d="M8 12.500H.5V.500h13v6M.5 4.500h13M.5 8.500h8M5 .500v12M9.500.500v6M11 8v6M8 11h6" />
    ) : (
      <>
        <path d="M1 5V.500h12.500v13H9M1 4.500h12.500M5 .500v4M9.500.500v13M9 9h4.500" />
        <path d="M0 6h3v8H0z" fill="#1258a8" stroke="none" /><path d="M3.500 6h4.500v8H6V9H3.500z" fill="#27a4dd" stroke="none" />
      </>
    )}
  </Icon>
);
const G = "#8b8b8d";

const Toolbars = () => (
  <>
    <TopTools>
      <PreviewButton aria-label="预览">
        <svg width="22" height="28" viewBox="0 0 22 28">
          <path d="M0 0h22v4H0z" fill="#3a8ae0" /><path d="M0 7h18l4 4v17H0z" fill={BLUE} />
          <path d="M4 12h9M4 17h5M4 22h5" stroke="#fff" strokeWidth="1.600" />
          <path d="M16 22l5 5" stroke="#555" strokeWidth="2.500" />
          <circle cx="13" cy="19" r="4.700" fill="#cfe6fb" stroke="#e9eef3" strokeWidth="1.400" />
        </svg>
        <Tri dir="d" w={6} h={3} />
      </PreviewButton>
      <Sep $h={42} />
      <TopRight>
        <QuickBar>
          <Quick aria-label="保存">
            <Icon><path d="M0 0h14l2 2v14H0z" fill="#5c9be0" stroke="none" /><path d="M5 0h7v6H5z" fill="#fff" stroke="none" /><path d="M9 1.500h2v3H9z" fill="#5c9be0" stroke="none" /><path d="M2 9.500h8M2 12.500h12" stroke="#fff" strokeWidth="1.500" /></Icon>
          </Quick>
          <Quick aria-label="撤销">
            <Icon><path d="M0 6l6-6v4c6 0 9 3 10 11-2-4-5-5.500-10-5.500V13z" fill="#6da9ea" stroke="none" /></Icon>
          </Quick>
          <Quick aria-label="重做">
            <Icon><path d="M16 6l-6-6v4C4 4 1 7 0 15c2-4 5-5.500 10-5.500V13z" fill="#8b8b8d" stroke="none" /></Icon>
          </Quick>
          <Sep $l={1} $r={5} />
          <Quick aria-label="剪切">
            <Icon><path d="M4 0l7 11M12 0L5 11" stroke="#444" strokeWidth="1.800" /><circle cx="3.300" cy="12.700" r="2.400" stroke="#3a8fe8" strokeWidth="1.700" /><circle cx="12.700" cy="12.700" r="2.400" stroke="#3a8fe8" strokeWidth="1.700" /></Icon>
          </Quick>
          <Quick aria-label="复制"><CopyIcon /></Quick>
          <Quick aria-label="粘贴">
            <Icon><path d="M0 1h10v11H0z" fill="#f2a91c" stroke="none" /><path d="M3 0h4v3H3z" fill="#fff" stroke="#c07d00" strokeWidth=".7" /><path d="M6.500 4.500h6l3 3v8h-9z" fill="#fff6dc" stroke="#444" /><path d="M12 4.500V8h3.500" stroke="#444" /></Icon>
          </Quick>
          <Quick aria-label="格式刷">
            <Icon><path d="M15.500 0L9 7" stroke="#666" strokeWidth="3" /><path d="M0 7l6-1 5 5-3 5c-3 0-7-4-8-9z" fill="#f2a91c" stroke="none" /><path d="M6.500 5l5 5" stroke="#555" strokeWidth="1.500" /></Icon>
          </Quick>
          <Sep $l={1} />
        </QuickBar>
        <FileTabs>
          <NewTab aria-label="新建"><GridIcon plus /></NewTab>
          <FileTab>
            <GridIcon />
            <Txt s="新填报预览示例.cpt *" />
            <Push />
            <Icon w={8} h={8}><path d="M0 0l8 8M8 0L0 8" strokeWidth="1.300" /></Icon>
          </FileTab>
          <Push />
          <Icon w={12} h={10}><path d="M0 0h7v3H4v5H0z" fill="#222" stroke="none" /><path d="M4 5h8l-4 4z" fill="#222" stroke="none" /></Icon>
        </FileTabs>
      </TopRight>
    </TopTools>
    <FormatBar>
      <Combo label="字体" value="宋体" w={145} />
      <Sep $l={3} $h={1} />
      <Combo label="字号" value="9.0" w={55} mono px={10} pad={4} />
      <Tool $w={27}><Glyph $kind="b">B</Glyph></Tool>
      <Tool $w={27}><Glyph $kind="i">I</Glyph></Tool>
      <Tool $w={27}><Glyph $kind="u">U</Glyph></Tool>
      <Sep $l={2} $r={5} />
      <Tool $w={22} aria-label="左对齐"><AlignIcon a="l" /></Tool>
      <Tool $w={22} $active aria-label="居中"><AlignIcon a="c" c="#fff" /></Tool>
      <Tool $w={22} aria-label="右对齐"><AlignIcon a="r" /></Tool>
      <Sep $l={6} $r={3} />
      <Tool $w={40} $menu aria-label="边框"><Icon><path d="M.5.500h15v15H.5zM.5 7.500h15M7.500.500v15" strokeDasharray="1 1" /></Icon><Caret /></Tool>
      <Tool $w={40} $menu aria-label="背景"><Icon><path d="M3 7l6-5 5 6-6 4.500zM6 5V.800h2V6" strokeWidth="1.200" /><path d="M13 6l3 6-1.500 1-2-3z" fill="#333" stroke="none" /><path d="M0 13h16v3H0z" fill="#fff" stroke="none" /></Icon><Caret /></Tool>
      <Tool $w={40} $menu aria-label="字体颜色"><Icon><path d="M3.500 10.500L8 0l4.500 10.500M5 7.500h6" stroke="#222" strokeWidth="2" /><path d="M0 12.500h16V16H0z" fill="#000" stroke="none" /></Icon><Caret /></Tool>
      <Sep $r={2} />
      <Tool $w={26} aria-label="合并"><Icon w={14} h={14}><path d="M.5.500h13v13H.5z" fill="#fff" stroke="#222" strokeWidth="1.400" /><path d="M1 3h12v8H1z" fill="#35bdf2" stroke="#222" strokeWidth=".8" /><circle cx="7" cy="7" r="1.600" stroke="#fff" /></Icon></Tool>
      <Tool $w={26} aria-label="取消合并"><Icon w={14} h={14}><path d="M0 0h14v14H0z" fill={G} stroke="none" /><path d="M1.500 4h11M1.500 7.500h11M1.500 11h11M5 1.500v11M9.500 1.500v11" stroke="#ddd" /></Icon></Tool>
      <Sep $l={3} $r={2} />
      <Tool $w={26} aria-label="数据列"><FieldIcon /></Tool>
      <Tool $w={26}><Glyph $kind="ab">ab</Glyph></Tool>
      <Tool $w={26} aria-label="文本"><Icon w={16} h={14}><path d="M0 1h16M0 5h12M0 9h16M0 13h12" stroke={G} strokeWidth="1.600" /></Icon></Tool>
      <Tool $w={26}><Glyph $kind="fx">F<FxArg>(x)</FxArg></Glyph></Tool>
      <Tool $w={26} aria-label="图表"><Icon w={14} h={14}><path d="M0 6h4v8H0zM5 0h4v14H5zM10 4h4v10h-4z" fill={G} stroke="none" /></Icon></Tool>
      <Tool $w={26} aria-label="图片"><Icon w={16} h={14}><path d="M.5.500h15v13H.5z" fill="#a3a3a5" stroke={G} /><path d="M1 12l5-5 3 3 3-2 3 4v1H1z" fill={G} stroke="none" /></Icon></Tool>
      <Tool $w={26} aria-label="斜线"><Icon><path d="M0 1l16 7M0 1l9 14" stroke={G} strokeWidth="1.400" /></Icon></Tool>
      <Tool $w={26} aria-label="子报表"><Icon w={12} h={14}><path d="M.5.500h11v13H.5z" fill="#b5b5b7" stroke={G} /><path d="M2 3h8M2 5h8M2 11.500h8" stroke={G} /><path d="M3 6.500h6v3.500H3z" fill={G} stroke="none" /></Icon></Tool>
      <Tool $w={33} $menu aria-label="悬浮"><Icon w={22} h={16}><path d="M2.500 0v16M13.500 0v16M0 2.500h16M0 13.500h16" /><path d="M16 7h6l-3 4z" fill="#777" stroke="none" /></Icon></Tool>
      <Sep $l={2} />
    </FormatBar>
  </>
);

const RulerCanvas = () => (
  <Canvas>
    <Corner />
    <HRuler>
      {[0, 100, 200, 300, 400, 500, 600, 700, 800, 900, 1000].map((n) => (
        <HMark key={n}><span>{n}</span></HMark>
      ))}
    </HRuler>
    <VRuler><span>0</span></VRuler>
    <CanvasBody>
      <CanvasPage>
        <svg width="32" height="30" viewBox="0 0 32 30" fill="none" stroke="#333" strokeWidth="2.600">
          <path d="M1.500 16C8 5 24 5 30.500 16 24 28 8 28 1.500 16z" />
          <circle cx="16" cy="14" r="7.500" fill="#333" stroke="none" />
          <path d="M3 31L32 2" stroke="#b1b1b1" strokeWidth="3" />
          <path d="M1 29L30 0" />
        </svg>
        <svg width="30" height="30" viewBox="0 0 30 30">
          <path d="M0 30l2-10L19.500 3l7.500 7.500L10 28z" fill="#333" />
          <path d="M8 20.500L20 9" stroke="#b1b1b1" strokeWidth="2.500" />
          <path d="M18.500 3.500l7.500 7.500" stroke="#b1b1b1" strokeWidth="1.500" />
          <path d="M21 1.500c3-3 8-.5 8.500 3 .2 2-.5 3.500-1.500 4.500z" fill="#333" />
        </svg>
      </CanvasPage>
      <TealStrip />
    </CanvasBody>
  </Canvas>
);

const Sheet = () => (
  <SheetArea>
    <SheetClip>
      <Grid>
        <colgroup>
          <col style={{ width: 25 }} />
          {columns.map(([c, w]) => <col key={c} style={{ width: w }} />)}
        </colgroup>
        <thead>
          <tr>
            <ColHead><Icon w={24} h={9}><path d="M5 1.500h11M5 4.500h11M5 7.500h11" stroke="#888" strokeWidth="2" strokeDasharray="2 2" /></Icon></ColHead>
            {columns.map(([c], i) => <ColHead key={c} $on={i < 7}>{c}</ColHead>)}
          </tr>
        </thead>
        <tbody>
          {Array.from({ length: 24 }, (_, r) => (
            <Row key={r} $h={r % 2 ? 29 : 28}>
              <RowHead $bg={r === 0 ? "#cfeffb" : r === 1 ? "#ebebeb" : "#fafafb"}>{r + 1}</RowHead>
              {columns.map(([c], i) => (
                <Cell key={c} $kind={i > 6 ? undefined : r === 0 ? "title" : r === 1 ? "data" : undefined} $left={r === 1 && i < 6} $break={r > 1 && i === 6}>
                  {r === 0 && i < 7 && <Txt s={titles[i]} px={18} />}
                  {r === 1 && (i === 0 || i === 6) && <Txt s={`ds1.G(${titles[i]})`} px={15} />}
                </Cell>
              ))}
            </Row>
          ))}
        </tbody>
      </Grid>
      <Selection />
    </SheetClip>
    <VScroll>
      <ScrollButton aria-label="上"><ChevronUp size={14} /></ScrollButton>
      <VThumb />
      <ScrollButton aria-label="下"><ChevronDown size={14} /></ScrollButton>
    </VScroll>
  </SheetArea>
);

const PlusDot = () => (
  <g><circle cx="17" cy="8" r="4.500" fill="#1dbb50" stroke="none" /><path d="M17 5.500v5M14.500 8h5" stroke="#fff" strokeWidth="1.400" /></g>
);
const BottomBars = () => (
  <>
    <HScroll>
      <ScrollButton aria-label="左"><ChevronLeft size={14} /></ScrollButton>
      <HThumb />
      <ScrollButton aria-label="右"><ChevronRight size={14} /></ScrollButton>
    </HScroll>
    <Status>
      <SheetTab><Logo s={10} /><Latin $px={10}>sheet1</Latin></SheetTab>
      <StatusIcon aria-label="新增报表"><Icon w={23} h={13}><path d="M14 11.500H.5V.500h20v3" stroke="#777" /><path d="M3 2h3v8H3z" fill="#1258a8" stroke="none" /><path d="M6 2h5v8H9V6H6z" fill="#27a4dd" stroke="none" /><PlusDot /></Icon></StatusIcon>
      <StatusIcon aria-label="新增表单"><Icon w={23} h={13}><path d="M14 11.500H.5V.500h20v3M2.500 3h3.500v2H2.500zM7.500 3H11v2H7.500zM2.500 7h8v2h-8z" stroke="#777" /><PlusDot /></Icon></StatusIcon>
      <Push />
      <Tri dir="l" w={5} h={8} />
      <Sep $l={10} $r={10} $h={0} />
      <Tri dir="r" w={5} h={8} />
      <Sep $l={8} $r={7} $h={0} />
      <Icon w={11} h={11}><path d="M0 5.500h11" /></Icon>
      <Range type="range" min={0} max={200} defaultValue={98} aria-label="缩放" />
      <Icon w={11} h={11}><path d="M0 5.500h11M5.500 0v11" /></Icon>
      <ZoomInput aria-label="缩放比例" defaultValue="100" />
      <Percent>%</Percent>
    </Status>
  </>
);

const rows: [string, string][] = [["订单ID", "A2"], ["客户ID", "B2"], ["雇员ID", "C2"], ["运货商", "D2"], ["运货费", "E2"], ["货主名称", "F2"], ["货主地址", "G2"]];

const SubmitDialog = () => (
  <Dialog role="dialog" aria-label="报表填报属性">
    <DialogTitle>
      报表填报属性
      <button aria-label="关闭"><Icon w={15} h={15}><path d="M0 0l15 15M15 0L0 15" stroke="#000" strokeWidth="1.200" /></Icon></button>
    </DialogTitle>
    <DialogTabs>
      <DialogTab $active>提交</DialogTab>
      <DialogTab>数据校验</DialogTab>
      <DialogTab>填报快捷键设置</DialogTab>
    </DialogTabs>
    <Pane>
      <SubmitSide>
        <SubmitMain>
          <SubmitTools>
            <SubmitTool $w={34} aria-label="添加"><Icon w={14} h={14}><path d="M7 0v14M0 7h14" strokeWidth="1.800" /></Icon><Tri dir="d" w={5} h={4} /></SubmitTool>
            <SubmitTool $w={25} aria-label="删除"><Icon w={13} h={13}><path d="M0 1l13 11M12.500 0L.500 13" stroke="#e8332d" strokeWidth="1.900" /></Icon></SubmitTool>
            <SubmitTool $w={28} aria-label="复制"><CopyIcon /></SubmitTool>
            <SubmitTool $w={27} aria-label="上移"><Icon w={10} h={14}><path d="M5 14V3" strokeWidth="2" /><path d="M0 6l5-6 5 6z" fill="#333" stroke="none" /></Icon></SubmitTool>
            <SubmitTool $w={22} aria-label="下移"><Icon w={10} h={14}><path d="M5 0v11" strokeWidth="2" /><path d="M0 8l5 6 5-6z" fill="#333" stroke="none" /></Icon></SubmitTool>
            <SubmitTool $w={17} aria-label="排序"><Icon w={17} h={16}><circle cx="2.500" cy="2.500" r="1.500" /><circle cx="2.500" cy="8" r="1.500" /><circle cx="2.500" cy="13.500" r="1.500" /><path d="M8.500 0h5v9H17l-6 7-6-7h3.500z" fill="#333" stroke="none" /></Icon></SubmitTool>
          </SubmitTools>
          <SubmitList>
            <SubmitItem>
              <Icon w={14} h={12}><path d="M.5.500h10v9H.5z" fill="#fff" stroke="#1b4d96" /><path d="M2 3h2M5 3h4M2 5h2M5 5h3M2 7h2" stroke="#1b4d96" /><path d="M12 2h1.500v9.500H4" stroke="#1b3f78" strokeWidth="1.500" /></Icon>
              <Txt s="内置SQL1" />
            </SubmitItem>
          </SubmitList>
        </SubmitMain>
        <Nubs><Tri dir="l" w={4} h={7} color="#777" /><Tri dir="r" w={4} h={7} color="#777" /></Nubs>
      </SubmitSide>
      <Form>
        <Legend>提交类型</Legend>
        <Line $indent={13} $gap={10}>
          <label htmlFor="kind"><Txt s="选择提交类型:" /></label>
          <Combo id="kind" label="选择提交类型" value="智能提交" w={78} />
        </Line>
        <Legend $mt={5} $mb={2}>表</Legend>
        <Line>
          <label htmlFor="dbn"><Txt s="数据库:" /></label>
          <Combo id="dbn" label="数据库" value="FRDemo" w={108} mono px={10} pad={3} />
          <label htmlFor="schema"><Txt s="模式:" /></label>
          <Combo id="schema" label="模式" value="" w={108} />
          <label htmlFor="tbl"><Txt s="表:" /></label>
          <Combo id="tbl" label="表" value="S订单" w={108} pad={3} plain />
          <Button $w={24} aria-label="刷新"><RotateCw size={15} strokeWidth={2.500} color="#444" /></Button>
          <Button $w={24} aria-label="查看"><Icon w={14} h={14}><path d="M4 13.500H1.500V.500h7l3 3V5M8 .500v3.500h3.500" strokeWidth="1.200" /><circle cx="8" cy="9" r="2.700" strokeWidth="1.200" /><path d="M10 11l3 3" strokeWidth="1.500" /></Icon></Button>
        </Line>
        <Legend $mt={4}>值</Legend>
        <Values>
          <TableBox>
            <FieldTable>
              <colgroup><col style={{ width: 49 }} /><col style={{ width: 165 }} /><col style={{ width: 165 }} /></colgroup>
              <thead><tr><th>主键</th><th>列</th><th>值</th></tr></thead>
              <tbody>
                {rows.map(([n, v], i) => (
                  <tr key={n}>
                    <td><KeyBox type="checkbox" defaultChecked={i === 0} aria-label={n} /></td>
                    <td><Txt s={n} /></td>
                    <td><Txt s={v} /></td>
                  </tr>
                ))}
              </tbody>
            </FieldTable>
          </TableBox>
          <Actions>
            {["智能添加字段", "添加字段", "智能添加单元格", "智能添加单元格组", "批量修改单元格", "移除字段"].map((b) => (
              <Button key={b} $w={122} $pad={18}>{b}</Button>
            ))}
            <CheckLine>
              <BlueBox type="checkbox" defaultChecked />
              未修改不更新
              <Help type="button" aria-label="帮助">?</Help>
            </CheckLine>
          </Actions>
        </Values>
        <Legend $mt={4}>提交条件</Legend>
        <Condition>
          <ConditionText aria-label="提交条件" />
          <Button $w={110}>设置提交条件</Button>
        </Condition>
        <Line><Button $w={92}>设置提交事件</Button></Line>
      </Form>
      <RedBox $x={0} $y={22} $w={87} $h={23} />
      <RedBox $x={188} $y={41} $w={513} $h={230} />
      <Badge $x={-30} $y={9}>3</Badge>
      <Badge $x={150} $y={47}>4</Badge>
    </Pane>
    <DialogFoot>
      <Button $w={44}>确定</Button>
      <Button $w={44}>取消</Button>
      <RedBox $x={601} $y={5} $w={48} $h={21} />
      <Badge $x={571} $y={-16}>5</Badge>
    </DialogFoot>
  </Dialog>
);

const P = "#6b6e75";
const RightSide = () => (
  <>
    <Rail>
      <RailTop><Tri dir="r" w={5} h={9} /></RailTop>
      <RailButton aria-label="单元格元素"><Icon><path d="M1 16V1h15M1 10.500h15M11.500 1v9.500M1 15V11M5.500 11v5M10 11v5M11.500 5.500H16" stroke="#8b8b90" strokeWidth="1.500" /></Icon></RailButton>
      <RailButton $active aria-label="单元格属性">
        <Icon><path d="M0 0h4.500v4.500H0zM5.700 0h4.500v4.500H5.700zM11.500 0H16v4.500h-4.500zM0 5.700h4.500v4.500H0zM0 11.500h4.500V16H0z" fill={BLUE} stroke="none" /><circle cx="11" cy="11" r="5" fill={BLUE} stroke="none" /><path d="M11 8v1.500M11 10.300V14" stroke="#fff" strokeWidth="1.600" /></Icon>
      </RailButton>
      <RailButton aria-label="悬浮元素"><Icon><path d="M3 0v16M13 0v16M0 2.500h16M0 13.500h16" stroke={P} strokeWidth="1.600" /></Icon></RailButton>
      <RailButton aria-label="控件设置"><Icon w={16} h={12}><path d="M1 1h14v10H1z" stroke={P} strokeWidth="1.600" /><path d="M8 4.500h5L10.500 8z" fill={P} stroke="none" /></Icon></RailButton>
      <RailButton aria-label="条件属性"><Icon w={18} h={12}><path d="M3 1.500H1v9h2M5 1h12v3.500H5zM5 7.500h9V11H5z" stroke={P} strokeWidth="1.500" /></Icon></RailButton>
      <RailButton aria-label="超级链接"><Link size={16} strokeWidth={2.500} color={P} transform="rotate(90)" /></RailButton>
    </Rail>
    <Right>
      <RightTitle>
        单元格属性
        <Icon w={12} h={12}><path d="M12 0L3 9" stroke={BLUE} strokeWidth="2" /><path d="M0 4.500V12h7.500z" fill={BLUE} stroke="none" /></Icon>
      </RightTitle>
      <RightTabs>
        <RightTab>扩展</RightTab>
        <RightTab $active>样式</RightTab>
        <RightTab>形态</RightTab>
        <RightTab>其他</RightTab>
      </RightTabs>
      <RightBody>
        <Combo label="样式类型" value="预定义样式" />
        <StyleList>
          {styleRows.map(([s, bg, fg, kind]) => (
            <StyleRow key={s} $bg={bg} $fg={fg} $kind={kind}><Txt s={s} px={18} /></StyleRow>
          ))}
        </StyleList>
        <RightThumb />
      </RightBody>
    </Right>
  </>
);

export default function App() {
  return (
    <App_>
      <Global />
      <TopMenu />
      <Main>
        <LeftPanel />
        <VSplit><Tri dir="l" w={5} h={9} /><Grip /></VSplit>
        <Center>
          <Toolbars />
          <RulerCanvas />
          <GrayGap />
          <Sheet />
          <BottomBars />
          <SubmitDialog />
        </Center>
        <RightSide />
      </Main>
    </App_>
  );
}
